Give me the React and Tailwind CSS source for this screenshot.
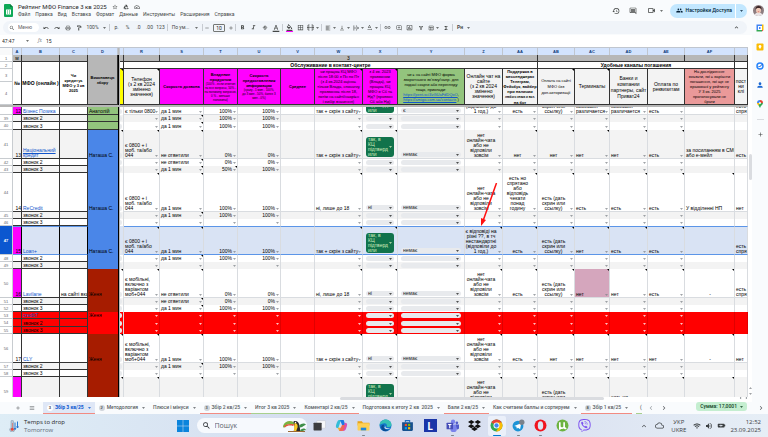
import { useState } from "react";
import clsx from "clsx";
import {
  MdStarBorder,
  MdOutlineAddToDrive,
  MdOutlineCloudDone,
  MdHistory,
  MdOutlineComment,
  MdOutlineVideocam,
  MdSearch,
  MdUndo,
  MdRedo,
  MdOutlinePrint,
  MdOutlineFormatPaint,
  MdAdd,
  MdRemove,
  MdFormatBold,
  MdFormatItalic,
  MdStrikethroughS,
  MdFormatColorText,
  MdFormatColorFill,
  MdBorderAll,
  MdFormatAlignLeft,
  MdVerticalAlignBottom,
  MdTextRotationNone,
  MdLink,
  MdOutlineAddComment,
  MdInsertChartOutlined,
  MdOutlineFilterAlt,
  MdFunctions,
  MdMenu,
  MdPeople,
  MdPerson,
  MdWifi,
  MdVolumeUp,
  MdKeyboardArrowUp,
  MdKeyboardArrowLeft,
  MdKeyboardArrowRight,
  MdOutlineCloud,
  MdBatteryChargingFull,
  MdOutlineTableChart,
} from "react-icons/md";
import { FaDropbox, FaViber } from "react-icons/fa";

const MENUS = ["Файл", "Правка", "Вид", "Вставка", "Формат", "Данные", "Инструменты", "Расширения", "Справка"];

const PHONE = "є 0800 + і\nмоб. та/або\n044";
const MOBILE = "є мобільні,\nвключно з\nваріантом\nмоб+044";
const NO_CHAT = "нет\nонлайн-чата\nабо не\nвідповіли\nзовсім";
const PROOF = "есть (дать\nскрин или\nссылку)";
const SITE = "так + скрін з сайту";
const HIDDEN = "есть но\nспрят";

// every dropdown column of the scrolled part, in order
const COLS = ["R", "S", "T", "U", "V", "W", "X", "Y", "Z", "AA", "AB", "AC", "AD", "AE", "AF", "AG"];
const COL_STYLE = {
  R: "pl-px", S: "pl-px", T: "text-right", U: "text-right", V: "", W: "pl-px",
  Z: "text-center", AA: "text-center", AB: "text-center", AC: "pl-px", AD: "pl-px", AE: "pl-px",
  AF: "pl-px", AG: "pl-px",
};
const NO_ARROW = ["V", "AF", "AG"];
const NOTES = ["R", "S", "W", "X", "AA", "AB", "AC", "AD", "AE"];

const call = (S, T, U) => ({ S, T, U });

const ROWS = [
  { n: "", h: "h-[8px]", id: "12", name: "Бізнес Позика", who: "Анатолій", d: "green", pink: true, main: true,
    cells: { R: "є тільки 0800", ...call("да 1 мин", "100%", "100%"), W: SITE, X: "yes", Y: "є", Z: "(відповіли до\n1 год.)", AA: "есть", AB: PROOF, AC: "комиссия\nразличается", AD: "комиссия\nразличается", AE: "есть", AG: HIDDEN } },
  { n: "39", h: "h-[7px]", sub: 2, d: "green", gray: true, notes: ["S"], cells: call("да 1 мин", "100%", "100%") },
  { n: "40", h: "h-[8px]", sub: 3, d: "green", notes: ["S"], cells: call("да 1 мин", "100%", "100%") },
  { n: "41", h: "h-[29px]", id: "13", name: "Національний кредит", who: "Наташа С.", d: "blue", gray: true, main: true, notes: NOTES,
    cells: { R: PHONE, ...call("не ответили", "0%", "0%"), W: SITE, X: "yes", Y: "немає", Z: NO_CHAT, AA: "нет", AB: "нет", AC: "нет", AD: "нет", AE: "есть", AF: "за посиланням в СМС\nабо е-мейл", AG: "есть" } },
  { n: "42", h: "h-[7px]", sub: 2, d: "blue", notes: ["S"], cells: call("не ответили", "0%", "0%") },
  { n: "43", h: "h-[7px]", sub: 3, d: "blue", gray: true, notes: ["S", "T"], cells: call("да 1 мин", "50%", "100%") },
  { n: "44", h: "h-[39px]", id: "14", name: "ReCredit", who: "Наташа С.", d: "blue", main: true, notes: [...NOTES, "AF"],
    cells: { R: PHONE, ...call("да 1 мин", "100%", "100%"), W: "ні, лише до 18", X: "ні", Y: "немає", Z: NO_CHAT, AA: "есть но\nспрятано\nабо\nвідповідь\nчекати\nпонад\nгодину", AB: PROOF, AC: "есть", AD: "есть", AE: "есть", AF: "У відділенні НП", AG: "нет" } },
  { n: "45", h: "h-[7px]", sub: 2, d: "blue", gray: true, notes: ["S"], cells: call("да 1 мин", "100%", "100%") },
  { n: "46", h: "h-[7px]", sub: 3, d: "blue", cells: {} },
  { n: "47", h: "h-[29px]", id: "15", name: "Loan+", who: "Наташа С.", d: "blue", pink: true, main: true, selected: true, notes: [...NOTES, "Z"],
    cells: { R: PHONE, ...call("да 1 мин", "100%", "100%"), W: SITE, X: "yes", Y: "немає", Z: "є відповіді на\nрізні ??, в тч\nнестандартні\n(відповіли до\n1 год.)", AA: "есть", AB: PROOF, AC: "нет", AD: "есть", AE: "есть", AG: HIDDEN } },
  { n: "48", h: "h-[7px]", sub: 2, d: "blue", notes: ["S"], cells: call("да 1 мин", "100%", "100%") },
  { n: "49", h: "h-[7px]", sub: 3, d: "blue", gray: true, cells: {} },
  { n: "50", h: "h-[29px]", id: "16", name: "Lavilane", site: "на сайті вказ", who: "Женя", d: "brown", pink: true, main: true, notes: [...NOTES, "Z", "AF"],
    cells: { R: MOBILE, ...call("не ответили", "0%", "0%"), W: "ні, лише до 18", X: "ні", Y: "немає", Z: NO_CHAT, AA: "есть", AB: PROOF, AC: "нет", AD: "нет", AE: "есть", AF: "-", AG: HIDDEN } },
  { n: "51", h: "h-[7px]", sub: 2, d: "brown", gray: true, notes: ["S"], cells: call("не ответили", "0%", "0%") },
  { n: "52", h: "h-[7px]", sub: 3, d: "brown", notes: ["S"], cells: call("да 1 мин", "100%", "100%") },
  { n: "53", h: "h-[7px]", name: "credit7", who: "Женя", d: "red", red: true, cells: {} },
  { n: "54", h: "h-[8px]", sub: 2, d: "red", red: true, cells: {} },
  { n: "55", h: "h-[7px]", sub: 3, d: "red", red: true, cells: {} },
  { n: "56", h: "h-[29px]", id: "17", name: "CLY", who: "Женя", d: "brown", main: true, notes: [...NOTES, "Z", "AF"],
    cells: { R: MOBILE, ...call("да 1 мин", "100%", "100%"), W: SITE, X: "ні", Y: "немає", Z: NO_CHAT, AA: "есть", AB: "нет", AC: "нет", AD: "нет", AE: "нет", AF: "-", AG: "нет" } },
  { n: "57", h: "h-[7px]", sub: 2, d: "brown", gray: true, notes: ["S"], cells: call("да 1 мин", "100%", "100%") },
  { n: "58", h: "h-[7px]", sub: 3, d: "brown", cells: {} },
  { n: "59", h: "h-[29px]", d: "brown", gray: true, pink: true, main: true, notes: [...NOTES, "Z", "AF"],
    cells: { X: "yes", Z: NO_CHAT, AB: PROOF, AD: "есть но\nспрятано" } },
];

const D_BG = { green: "bg-[#93c47d]", blue: "bg-[#4a86e8]", brown: "bg-[#a61c00]", red: "bg-[#ff0000]" };

const TABS = [
  { label: "Збір 3 кв/25", badge: "3", line: "border-[#f28b82]" },
  { label: "Методология", badge: "2" },
  { label: "Плюси і мінуси" },
  { label: "Збір 2 кв/25", badge: "3", line: "border-[#f28b82]" },
  { label: "Итог 3 кв 2025", line: "border-[#a8d08d]" },
  { label: "Коментарі 2 кв/25", line: "border-[#f28b82]" },
  { label: "Подготовка к итогу 2 кв  2025" },
  { label: "Бали 2 кв/25", line: "border-[#f28b82]" },
  { label: "Как считаем баллы и сортируем" },
  { label: "Збір 1 кв/25", badge: "8", line: "border-[#f28b82]" },
];

function Caret({ className }) {
  return (
    <svg viewBox="0 0 4 2" className={clsx("w-[3px] h-[2px] shrink-0 fill-current", className)}>
      <path d="M0 0h4L2 2z" />
    </svg>
  );
}

function Note() {
  return (
    <svg viewBox="0 0 3 3" className="absolute top-0 right-0 w-[2px] h-[2px] fill-black">
      <path d="M0 0h3v3z" />
    </svg>
  );
}

/* ---------- header ---------- */

function SheetsLogo() {
  return (
    <svg viewBox="0 0 18 26" className="w-[9px] h-[13px] shrink-0">
      <path d="M2 0h10l6 6v18a2 2 0 0 1-2 2H2a2 2 0 0 1-2-2V2a2 2 0 0 1 2-2z" fill="#0fa958" />
      <path d="M12 0l6 6h-6z" fill="#087f3f" />
      <path d="M4 11h10v10H4zm2 2v2h2v-2zm4 0v2h2v-2zm-4 4v2h2v-2zm4 0v2h2v-2z" fill="#fff" fillRule="evenodd" />
    </svg>
  );
}

function Avatar() {
  return (
    <svg viewBox="0 0 22 22" className="w-[11px] h-[11px] rounded-full">
      <rect width="22" height="22" fill="#8d7d80" />
      <path d="M3 22c0-5 4-7 8-7s8 2 8 7z" fill="#e9e4e6" />
      <ellipse cx="11" cy="10" rx="5" ry="6.5" fill="#f0c9b8" />
      <path d="M5 10C5 3 8 2 11 2s7 1 6 8c-1-3-3-4-6-4S6 7 5 10z" fill="#3d2626" />
      <path d="M9 13h4l-2 1.500z" fill="#c8474f" />
    </svg>
  );
}

function Header() {
  return (
    <header className="flex h-[21px] shrink-0 items-center pl-[4px] pr-[4px]">
      <SheetsLogo />
      <div className="ml-[5px] flex flex-col">
        <div className="flex items-center gap-[5px] h-[8px] text-[#444746]">
          <h1 className="text-[6px] leading-[8px] text-[#1f1f1f] whitespace-nowrap">Рейтинг МФО Finance 3 кв 2025</h1>
          <button aria-label="Пометить"><MdStarBorder className="size-[6px]" /></button>
          <button aria-label="Переместить"><MdOutlineAddToDrive className="size-[6px]" /></button>
          <button aria-label="Статус документа"><MdOutlineCloudDone className="size-[6px]" /></button>
        </div>
        <nav className="flex gap-[5px] text-[5px] leading-[7px] text-[#444746]">
          {MENUS.map((m) => (
            <button key={m}>{m}</button>
          ))}
        </nav>
      </div>
      <div className="ml-auto flex items-center text-[#444746]">
        <button aria-label="История" className="mr-[9px]"><MdHistory className="size-[8px]" /></button>
        <button aria-label="Комментарии" className="mr-[10px]"><MdOutlineComment className="size-[8px]" /></button>
        <button aria-label="Встреча" className="mr-[7px] flex items-center gap-[4px]">
          <MdOutlineVideocam className="size-[9px]" />
          <Caret />
        </button>
        <div className="mr-[6px] flex h-[14px] overflow-hidden rounded-full bg-[#c2e7ff] text-[#001d35]">
          <button className="flex items-center gap-[3px] border-r border-white pl-[6px] pr-[3px] text-[5px] font-medium whitespace-nowrap">
            <MdPeople className="size-[7px]" />
            Настройки Доступа
          </button>
          <button aria-label="Доступ" className="flex w-[11px] items-center justify-center"><Caret /></button>
        </div>
        <button aria-label="Аккаунт"><Avatar /></button>
      </div>
    </header>
  );
}

/* ---------- toolbar ---------- */

function Tool({ label, children, menu }) {
  return (
    <button aria-label={label} className={clsx("flex shrink-0 items-center justify-center", menu ? "w-[14px] gap-[2px]" : "w-[11px]")}>
      {children}
      {menu && <Caret />}
    </button>
  );
}

function Sep() {
  return <span className="mx-px h-[7px] w-px shrink-0 bg-[#c7cbd1]" />;
}

function Toolbar() {
  return (
    <div className="mx-[3px] mb-px mr-[5px] flex h-[13px] shrink-0 items-center rounded-full bg-[#f0f4f9] pl-[5px] text-[5px] text-[#444746]">
      <label className="mr-px flex h-[9px] w-[31px] items-center gap-[3px] rounded-full bg-white pl-[1px]">
        <MdSearch className="size-[6px] shrink-0" />
        <input placeholder="Меню" aria-label="Меню" className="w-full min-w-0 bg-transparent text-[5px] leading-[7px] outline-none placeholder:text-[#5f6368]" />
      </label>
      <Tool label="Отменить"><MdUndo className="size-[6px]" /></Tool>
      <Tool label="Повторить"><MdRedo className="size-[6px]" /></Tool>
      <Tool label="Печать"><MdOutlinePrint className="size-[6px]" /></Tool>
      <Tool label="Формат по образцу"><MdOutlineFormatPaint className="size-[6px]" /></Tool>
      <button className="flex w-[24px] items-center justify-center gap-[4px]">100%<Caret /></button>
      <Sep />
      <Tool label="Рубли">р.</Tool>
      <Tool label="Процент">%</Tool>
      <Tool label="Меньше знаков">.0</Tool>
      <Tool label="Больше знаков">.00</Tool>
      <Tool label="Форматы">123</Tool>
      <Sep />
      <button className="flex w-[32px] items-center justify-center gap-[6px] whitespace-nowrap">По ум...<Caret /></button>
      <Sep />
      <button aria-label="Уменьшить"><MdRemove className="mr-[3px] size-[6px]" /></button>
      <input aria-label="Размер шрифта" defaultValue="10" className="h-[8px] w-[12px] rounded-[1px] border border-[#747775] bg-transparent text-center text-[5px] leading-[6px] text-[#1f1f1f]" />
      <button aria-label="Увеличить"><MdAdd className="ml-[3px] size-[6px]" /></button>
      <Sep />
      <Tool label="Полужирный"><MdFormatBold className="size-[7px]" /></Tool>
      <Tool label="Курсив"><MdFormatItalic className="size-[7px]" /></Tool>
      <Tool label="Зачеркнутый"><MdStrikethroughS className="size-[6px]" /></Tool>
      <Tool label="Цвет текста"><MdFormatColorText className="size-[8px]" /></Tool>
      <Sep />
      <Tool label="Цвет заливки">
        <span className="border-b border-[#ff00ff]"><MdFormatColorFill className="size-[7px]" /></span>
      </Tool>
      <Tool label="Границы"><MdBorderAll className="size-[7px]" /></Tool>
      <Tool label="Объединить" menu>
        <svg viewBox="0 0 14 14" className="size-[7px]" fill="none" stroke="currentColor" strokeWidth="1.500">
          <path d="M5 2H2v10h3M9 2h3v10H9M0 7h5M14 7H9M4 5l2 2-2 2M10 5L8 7l2 2" />
        </svg>
      </Tool>
      <Sep />
      <Tool label="Выравнивание" menu><MdFormatAlignLeft className="size-[6px]" /></Tool>
      <Tool label="По вертикали" menu><MdVerticalAlignBottom className="size-[6px]" /></Tool>
      <Tool label="Перенос" menu>
        <svg viewBox="0 0 14 14" className="size-[6px]" fill="none" stroke="currentColor" strokeWidth="1.500">
          <path d="M2 1v12M8 1v3M8 10v3M3 7h10M10 4l3 3-3 3" />
        </svg>
      </Tool>
      <Tool label="Поворот" menu><MdTextRotationNone className="size-[7px]" /></Tool>
      <Sep />
      <Tool label="Ссылка"><MdLink className="size-[7px]" /></Tool>
      <Tool label="Комментарий"><MdOutlineAddComment className="size-[6px]" /></Tool>
      <Tool label="Диаграмма"><MdInsertChartOutlined className="size-[7px]" /></Tool>
      <Tool label="Фильтр"><MdOutlineFilterAlt className="size-[6px]" /></Tool>
      <Tool label="Таблица" menu><MdOutlineTableChart className="size-[6px]" /></Tool>
      <Tool label="Функции"><MdFunctions className="size-[6px]" /></Tool>
      <Sep />
      <button className="ml-[3px] flex items-center gap-[4px] font-bold">Рн<Caret /></button>
      <button aria-label="Скрыть меню" className="ml-auto mr-[7px]"><MdKeyboardArrowUp className="size-[7px]" /></button>
    </div>
  );
}

function FormulaBar() {
  const [value, setValue] = useState("15");
  return (
    <div className="flex h-[12px] shrink-0 items-center bg-white text-[5px] text-[#1f1f1f]">
      <input aria-label="Диапазон" defaultValue="47:47" className="w-[24px] pl-[2px] text-[5px] leading-[7px] outline-none" />
      <Caret className="ml-[2px] text-[#444746]" />
      <span className="ml-[9px] w-[8px] font-serif italic text-[#80868b]">fx</span>
      <input aria-label="Формула" value={value} onChange={(e) => setValue(e.target.value)} className="min-w-0 flex-1 text-[5px] leading-[7px] outline-none" />
    </div>
  );
}

/* ---------- grid ---------- */

function ColumnLetters() {
  const letters = ["", "A", "B", "C", "D", null, "", ...COLS];
  return (
    <tr className="text-[4px] leading-[5px] font-bold text-[#0b3a7a]">
      {letters.map((l, i) => (
        <th key={i} className="p-0">
          <div className={clsx("flex h-[8px] items-center justify-center overflow-hidden border-t border-r border-[#c0c6cf]", l === null ? "bg-[#b7b7b7]" : i === 0 ? "bg-[#f8f9fa]" : "bg-[#d3e3fd]")}>
            {l === "AG" ? "" : l}
          </div>
        </th>
      ))}
    </tr>
  );
}

function RowNumber({ children, h, selected }) {
  return (
    <th className="p-0 font-normal">
      <div className={clsx("flex items-center justify-center overflow-hidden border-r border-b border-[#c8ccd0] text-[4px] leading-[5px]", h, selected ? "bg-[#0b57d0] font-bold text-white" : "bg-white text-[#5f6368]")}>
        {children}
      </div>
    </th>
  );
}

function Freeze({ h }) {
  return (
    <td className="p-0">
      <div className={clsx("border-l border-black bg-[#b7b7b7]", h)} />
    </td>
  );
}

function HeadCell({ className, children, note, rowSpan = 2, colSpan, h = "h-[36px]" }) {
  return (
    <th rowSpan={rowSpan} colSpan={colSpan} className="p-0 font-normal">
      <div className={clsx("relative flex items-center justify-center overflow-hidden border-r border-b border-[#333] text-center whitespace-nowrap", h, className)}>
        <div>{children}</div>
        {note && <Note />}
      </div>
    </th>
  );
}

const GRAY = "bg-[#f3f3f3] text-[5px] leading-[5px]";
const PINK = "bg-[#ff00ff] text-[4px] leading-[5px]";
const BAND = "bg-[#b7b7b7] text-[5px] leading-[6px]";

function FrozenRows() {
  return (
    <>
      <tr>
        <RowNumber h="h-[7px]">1</RowNumber>
        <HeadCell rowSpan={1} h="h-[7px]" className={BAND}>м</HeadCell>
        <HeadCell rowSpan={1} h="h-[7px]" className={BAND} />
        <HeadCell rowSpan={1} h="h-[7px]" className={BAND} />
        <HeadCell rowSpan={4} h="h-[50px]" className="bg-[#b7b7b7] text-[4px] leading-[5px] font-bold">Виконавець<br />збору</HeadCell>
        <Freeze h="h-[7px]" />
        <HeadCell rowSpan={1} h="h-[7px]" className={BAND} />
        <HeadCell rowSpan={1} h="h-[7px]" className={BAND} />
        <HeadCell rowSpan={1} colSpan={9} h="h-[7px]" className={BAND}>3</HeadCell>
        <HeadCell rowSpan={1} colSpan={4} h="h-[7px]" className={BAND} />
        <HeadCell rowSpan={1} h="h-[7px]" className={BAND} />
        <HeadCell rowSpan={1} h="h-[7px]" className={BAND} />
      </tr>
      <tr>
        <RowNumber h="h-[7px]">2</RowNumber>
        <HeadCell rowSpan={3} h="h-[43px]" className="bg-white text-[5px] font-bold">№</HeadCell>
        <HeadCell rowSpan={3} h="h-[43px]" className="bg-white text-[5px] font-bold">МФО (онлайн )</HeadCell>
        <HeadCell rowSpan={3} h="h-[43px]" className="bg-white text-[4px] leading-[5px] font-bold">Чи<br />кредитує<br />МФО у 3 кв<br />2025</HeadCell>
        <Freeze h="h-[7px]" />
        <HeadCell rowSpan={1} h="h-[7px]" className="bg-white" />
        <HeadCell rowSpan={1} colSpan={10} h="h-[7px]" className="bg-white text-[5px] leading-[6px] font-bold">Обслуживание в контакт-центре</HeadCell>
        <HeadCell rowSpan={1} colSpan={5} h="h-[7px]" className="bg-white text-[5px] leading-[6px] font-bold">Удобные каналы погашения</HeadCell>
        <HeadCell rowSpan={1} h="h-[7px]" className="bg-white" />
      </tr>
      <tr>
        <RowNumber h="h-[13px]">3</RowNumber>
        <Freeze h="h-[13px]" />
        <HeadCell className="bg-[#ffff00]" note />
        <HeadCell className={GRAY} note>Телефон<br />(з 2 кв 2024<br />змінено<br />значення)</HeadCell>
        <HeadCell className={PINK}><b>Скорость дозвона</b></HeadCell>
        <HeadCell className={PINK}>
          <b>Владение</b><br />
          <b>продуктом</b>
          <div className="text-[3px] leading-[4px]">(100% - если ответил<br />на все вопросы, 50% -<br />на половину вопросов,<br />0 % - меньше<br />половины)</div>
        </HeadCell>
        <HeadCell className={PINK}>
          <b>Скорость<br />предоставления<br />информации</b>
          <div className="text-[3px] leading-[4px]">(сразу - 1 мин - 100%,<br />до 3 мин - 50%, более 3<br />мин - 0%)</div>
        </HeadCell>
        <HeadCell className={PINK}><b>Среднее</b></HeadCell>
        <HeadCell className={PINK} note>
          чи працює КЦ МФО<br />після 18:00 з Пн по Пт<br />(з 4 кв.2024 оцінює<br />тільки Влада, спочатку<br />прозвонює після 18,<br />потім на сайті/наорієн<br />і вибір значення)
        </HeadCell>
        <HeadCell className={PINK} note>з 4 кв. 2023<br />прозвоном<br />(Влада), чи<br />працює КЦ<br />МФО в Сб та<br />Нд? (прозвон<br />Сб або Нд)</HeadCell>
        <HeadCell className="bg-[#93c47d] text-[4px] leading-[5px]">
          чи є на сайті МФО форма<br />зворотнього зв'язку/напр. для<br />подачі скарги або перегляду<br />тощо, приклади:
          <br />
          <a href="#pent" className="text-[#1155cc] underline">https://pent.sc/4vGUaFdDQoO</a>,
          <br />
          <a href="#amigo" className="text-[#1155cc] underline">https://amigo.com.ua/contacts</a> )
        </HeadCell>
        <HeadCell className={GRAY}>Онлайн чат на<br />сайте<br />(з 2 кв 2024<br />змінено<br />значення)</HeadCell>
        <HeadCell className="bg-[#f3f3f3] text-[4px] leading-[5px] font-bold">
          Поддержка в<br />мессенджерах<br />Телеграм,<br />Фейсбук, вайбер<br />при наличии<br /><span className="text-[3px]">любого знака и вкл.</span><br />на бот
        </HeadCell>
        <HeadCell className="bg-[#f3f3f3] text-[4px] leading-[6px]" note>Оплата на сайті<br />МФО без<br />доп.авторизації</HeadCell>
        <HeadCell className={GRAY} note>Терминалы</HeadCell>
        <HeadCell className="bg-[#f3f3f3] text-[5px] leading-[6px]">Банки и<br />компании<br />партнеры, сайт<br />Приват24</HeadCell>
        <HeadCell className={GRAY}>Оплата по<br />реквизитам</HeadCell>
        <HeadCell className="bg-[#ea9999] text-[4px] leading-[5px]">На дослідження:<br />вказати, які є варіанти<br />погашення, які ще не<br />враховані у рейтингу<br />У 3 кв. 2025<br />проголосували не<br />брати</HeadCell>
        <HeadCell className={GRAY}>пост<br />ни<br />клі</HeadCell>
      </tr>
      <tr>
        <RowNumber h="h-[23px]">4</RowNumber>
        <Freeze h="h-[23px]" />
      </tr>
      <tr>
        <td colSpan={23} className="p-0"><div className="h-[2px] bg-[#b7b7b7]" /></td>
      </tr>
    </>
  );
}

function Chip({ col, value, row }) {
  if (value === "yes") {
    return (
      <button className="mb-px flex w-full items-center justify-between overflow-hidden rounded-[3px] bg-[#11734b] px-[2px] text-left text-[5px] leading-[5px] whitespace-nowrap text-[#d4edbc]">
        <span>так, в<br />КЦ<br />підтверд<br />или</span>
        <Caret />
      </button>
    );
  }
  return (
    <div className="mb-px flex h-[5px] w-full items-center rounded-full bg-[#e8eaed] pr-[2px] text-[#1f1f1f]">
      <select aria-label={`${col}${row}`} defaultValue={value || ""} className="h-[5px] min-w-0 flex-1 appearance-none bg-transparent pl-[2px] text-[5px] leading-[5px] outline-none">
        <option value={value || ""}>{value || ""}</option>
      </select>
      <Caret />
    </div>
  );
}

function DataCell({ col, row }) {
  const value = row.cells[col];
  const chip = col === "X" || col === "Y";
  const note = row.notes?.includes(col);
  return (
    <td className="p-0">
      <div
        className={clsx(
          "relative flex items-end overflow-hidden border-r",
          row.h,
          chip ? "px-[3px]" : !row.main && "pb-px",
          row.red ? "border-[#e00000]" : "border-[#d9dce0]",
          row.main && !row.selected && "border-b",
          col === "AC" && row.n === "50" && "bg-[#d5a6bd]",
          row.selected && "border-y border-t-[#5b95e8] border-b-[#5b95e8]"
        )}
      >
        {chip ? (
          <Chip col={col} value={value} row={row.n} />
        ) : (
          <>
            <span className={clsx("min-w-0 flex-1 whitespace-pre", COL_STYLE[col], value === "-" && "text-center")}>{value}</span>
            {!NO_ARROW.includes(col) && (
              <button aria-label={`Список ${col}${row.n}`} className={clsx("mb-px flex w-[5px] shrink-0 justify-center", row.red ? "text-white" : "text-[#80868b]")}>
                <Caret />
              </button>
            )}
          </>
        )}
        {note && <Note />}
      </div>
    </td>
  );
}

function DataRow({ row }) {
  const bg = row.red ? "bg-[#ff0000]" : row.selected ? "bg-[#d9e3f4]" : row.gray ? "bg-[#f3f3f3]" : "bg-white";
  const left = clsx("flex items-end overflow-hidden border-r border-b", row.h, row.selected ? "border-t border-r-black border-y-[#5b95e8]" : "border-[#333]");
  return (
    <tr className={bg}>
      <RowNumber h={row.h} selected={row.selected}>{row.n}</RowNumber>
      <td className="p-0">
        <div className={clsx(left, "justify-end", row.pink && "bg-[#ff00ff]")}>{row.id}</div>
      </td>
      <td className="p-0">
        <div className={clsx(left, "pl-px")}>
          {row.name ? <a href={"#" + row.name} className="text-[#1155cc] underline">{row.name}</a> : row.sub ? `звонок ${row.sub}` : null}
        </div>
      </td>
      <td className="p-0">
        <div className={clsx(left, "pl-px whitespace-nowrap")}>{row.site}</div>
      </td>
      <td className="p-0">
        <div className={clsx("flex items-end overflow-hidden pl-px whitespace-nowrap", row.h, D_BG[row.d], row.d === "green" ? "border-b border-[#333]" : "pb-px")}>{row.who}</div>
      </td>
      <Freeze h={row.h} />
      <td className="p-0">
        <div className={clsx("relative flex items-end border-r border-[#d9dce0] pb-px", row.h)}>
          <span className="h-[5px] w-[2px] rounded-r-full bg-[#e8eaed]" />
          {row.main && row.n && row.n !== "44" && row.n !== "47" && <Note />}
        </div>
      </td>
      {COLS.map((c) => (
        <DataCell key={c} col={c} row={row} />
      ))}
    </tr>
  );
}

function Grid() {
  return (
    <div className="relative min-h-0 min-w-0 flex-1 overflow-hidden font-['Liberation_Sans',Arial,sans-serif] text-black">
      <table className="w-full table-fixed border-separate border-spacing-0 text-[5px] leading-[5px]">
        <colgroup>
          <col className="w-[13px]" />
          <col className="w-[9px]" />
          <col className="w-[38px]" />
          <col className="w-[28px]" />
          <col className="w-[30px]" />
          <col className="w-[2px]" />
          <col className="w-[4px]" />
          <col className="w-[36px]" />
          <col className="w-[44px]" />
          <col className="w-[34px]" />
          <col className="w-[43px]" />
          <col className="w-[34px]" />
          <col className="w-[48px]" />
          <col className="w-[35px]" />
          <col className="w-[67px]" />
          <col className="w-[38px]" />
          <col className="w-[35px]" />
          <col className="w-[37px]" />
          <col className="w-[35px]" />
          <col className="w-[38px]" />
          <col className="w-[37px]" />
          <col className="w-[50px]" />
          <col />
        </colgroup>
        <thead>
          <ColumnLetters />
          <FrozenRows />
        </thead>
        <tbody>
          {ROWS.map((r) => (
            <DataRow key={r.n} row={r} />
          ))}
        </tbody>
      </table>
      {/* annotation arrow pointing at Z47 */}
      <svg viewBox="0 0 20 44" className="absolute top-[136px] left-[479px] h-[44px] w-[20px]">
        <path d="M17.500 0L4 38" stroke="#ff1010" strokeWidth="1.500" />
        <path d="M2 43V35l5 2z" fill="#ff1010" />
      </svg>
    </div>
  );
}

function ScrollColumn() {
  return (
    <div className="flex w-[4px] shrink-0 flex-col items-center bg-white">
      <div className="mt-[107px] h-[26px] w-[3px] rounded-full bg-[#dadce0]" />
      <div className="mt-auto mb-[2px] flex flex-col gap-[4px] text-[#80868b]">
        <Caret className="rotate-180" />
        <Caret />
      </div>
    </div>
  );
}

function SidePanel() {
  return (
    <aside className="flex w-[16px] shrink-0 flex-col items-center gap-[11px] pt-[3px]">
      <button aria-label="Календарь">
        <svg viewBox="0 0 16 16" className="size-[8px]">
          <path d="M1 1h11v3H4v8H1z" fill="#4285f4" />
          <path d="M12 1h3v11h-3z" fill="#fbbc04" />
          <path d="M1 12h11v3H1z" fill="#34a853" />
          <path d="M12 12h3l-3 3z" fill="#ea4335" />
          <path d="M4 4h8v8H4z" fill="#fff" />
          <path d="M6 6h2v4H6zm3 0h1v4H9z" fill="#4285f4" />
        </svg>
      </button>
      <button aria-label="Заметки">
        <svg viewBox="0 0 16 16" className="size-[8px]">
          <rect x="1" y="1" width="14" height="14" rx="2" fill="#fbbc04" />
          <path d="M8 4a3 3 0 0 0-1.500 5.500V11h3V9.500A3 3 0 0 0 8 4z" fill="#fff" />
        </svg>
      </button>
      <button aria-label="Задачи">
        <svg viewBox="0 0 16 16" className="size-[8px]">
          <circle cx="8" cy="8" r="6" fill="none" stroke="#2684fc" strokeWidth="3" />
          <path d="M5 8l2 2 6-6" fill="none" stroke="#0b57d0" strokeWidth="2" />
        </svg>
      </button>
      <button aria-label="Контакты"><MdPerson className="size-[8px] text-[#1967d2]" /></button>
      <button aria-label="Карты">
        <svg viewBox="0 0 16 16" className="size-[8px]">
          <path d="M8 0a6 6 0 0 0-6 6h6z" fill="#4285f4" />
          <path d="M8 0a6 6 0 0 1 6 6H8z" fill="#ea4335" />
          <path d="M2 6h6l-3 5C3 9 2 8 2 6z" fill="#fbbc04" />
          <path d="M14 6c0 4-5 5-6 10-1-2-2-3-3-5l3-5z" fill="#34a853" />
          <circle cx="8" cy="6" r="2" fill="#fff" />
        </svg>
      </button>
      <span className="h-px w-[7px] bg-[#dadce0]" />
      <button aria-label="Дополнения"><MdAdd className="size-[7px] text-[#444746]" /></button>
    </aside>
  );
}

function SheetTabs() {
  const [active, setActive] = useState(0);
  return (
    <footer className="flex h-[12px] shrink-0 items-stretch bg-[#f9fbfd] text-[5px] leading-[7px] font-medium text-[#575b5f]">
      <button aria-label="Добавить лист" className="ml-[15px]"><MdAdd className="size-[6px]" /></button>
      <button aria-label="Все листы" className="mr-[8px] ml-[8px]"><MdMenu className="size-[6px]" /></button>
      {TABS.map((t, i) => (
        <button
          key={t.label}
          onClick={() => setActive(i)}
          className={clsx(
            "flex shrink-0 items-center gap-[2px] border-b px-[4px] whitespace-pre",
            t.line || "border-transparent",
            active === i && "bg-[#dfe7f6] font-bold text-[#0b57d0]"
          )}
        >
          {t.badge && (
            <span className={clsx("flex size-[6px] items-center justify-center rounded-full text-[4px] leading-[4px] text-[#444746]", active === i ? "bg-white" : "bg-[#cfd4da]")}>{t.badge}</span>
          )}
          {t.label}
          <Caret className="ml-[2px]" />
        </button>
      ))}
      <button className="ml-[4px] shrink-0 border-b border-[#a8d08d] pl-[4px]">(</button>
      <button aria-label="Назад" className="ml-[5px] text-[#9aa0a6]"><MdKeyboardArrowLeft className="size-[8px]" /></button>
      <button aria-label="Вперед" className="ml-[5px]"><MdKeyboardArrowRight className="size-[8px]" /></button>
      <button className="mr-[10px] mb-[3px] ml-auto flex shrink-0 items-center gap-[3px] rounded-[3px] bg-[#c4eed0] px-[4px] text-[5px] text-[#0a3d1c]">
        Сумма: 17,0001
        <Caret />
      </button>
      <button aria-label="Показать панель" className="mr-[3px]"><MdKeyboardArrowRight className="size-[8px]" /></button>
    </footer>
  );
}

/* ---------- taskbar ---------- */

function AppIcon({ label, active, running, children }) {
  return (
    <button
      aria-label={label}
      className={clsx("flex h-[20px] w-[18px] shrink-0 flex-col items-center justify-between rounded-[2px] pt-[3px]", active && "bg-[#ebf0fa]")}
    >
      <svg viewBox="0 0 24 24" className="size-[13px]">{children}</svg>
      <span className={clsx("h-px rounded-full", active ? "w-[8px] bg-[#0078d4]" : running ? "w-[3px] bg-[#80868b]" : "w-[3px]")} />
    </button>
  );
}

function Taskbar() {
  return (
    <div className="flex h-[23px] shrink-0 items-center bg-linear-to-r from-[#deedf6] via-[#d3daee] to-[#e6eef6] font-['Open_Sans',sans-serif] text-[6px] leading-[8px] text-[#1f2328]">
      <div className="flex flex-1 items-center gap-[5px] pl-[9px]">
        <svg viewBox="0 0 20 24" className="h-[12px] w-[10px]">
          <path d="M4 3a2.500 2.500 0 0 1 5 0v12a5 5 0 1 1-5 0z" fill="#b8c8d8" stroke="#7d94ab" />
          <circle cx="6.500" cy="18.500" r="3" fill="#e4483c" />
          <path d="M6 6h1v12H6z" fill="#e4483c" />
          <path d="M12 5v14m-2-3l2 3 2-3M17 3v13m-2-3l2 3 2-3" stroke="#2575d0" strokeWidth="2" fill="none" />
        </svg>
        <div className="whitespace-nowrap">
          <div>Temps to drop</div>
          <div className="text-[#5f6b78]">Tomorrow</div>
        </div>
      </div>
      <div className="flex items-center gap-[4px]">
        <button aria-label="Пуск" className="mr-[4px]">
          <svg viewBox="0 0 24 24" className="size-[12px]" fill="#0b84dc">
            <path d="M0 0h11.500v11.500H0zM12.500 0H24v11.500H12.500zM0 12.500h11.500V24H0zM12.500 12.500H24V24H12.500z" />
          </svg>
        </button>
        <label className="flex h-[15px] w-[110px] items-center rounded-full bg-[#f6f9fd] pl-[5px]">
          <MdSearch className="size-[9px] shrink-0" />
          <input aria-label="Пошук" placeholder="Пошук" className="ml-[4px] min-w-0 flex-1 bg-transparent text-[7px] leading-[9px] outline-none placeholder:text-[#5b636b]" />
          <svg viewBox="0 0 50 28" className="h-[14px] w-[25px] shrink-0">
            <path d="M2 14C5 4 16 2 23 6l3 5C18 9 8 9 5 17c-2 1-3-1-3-3z" fill="#7bb342" />
            <path d="M4 15c4-5 12-6 21-4l-3 3c-6-2-12-1-16 3z" fill="#e2553b" />
            <path d="M23 5c6-3 11 2 12 8l2 13H22c4-6 4-9 2-14z" fill="#2a2a2e" />
            <path d="M25 8c5-1 7 4 6 9l-3 8h-4z" fill="#fbc928" />
            <circle cx="27" cy="7" r="1.500" fill="#fff" />
            <path d="M34 14c5-6 11-6 14-2-4 0-5 4-12 5zM36 24c4-6 9-6 12-2-4 0-6 3-12 3z" fill="#3f8f4a" />
            <path d="M12 25h34" stroke="#9a6a35" strokeWidth="2" />
          </svg>
        </label>
        <AppIcon label="Представление задач">
          <rect x="7" y="3" width="16" height="14" rx="1" fill="#f7f8fa" stroke="#c3c8cf" />
          <rect x="1" y="7" width="15" height="14" rx="1" fill="#3c3c3e" />
        </AppIcon>
        <AppIcon label="Copilot">
          <path d="M8 2h8l3 9h-6l-2-5z" fill="#1b79e3" />
          <path d="M8 2C5 2 4 5 2 11c-1 4 0 6 4 6l4-12c0-2 0-3-2-3z" fill="#33bdd8" />
          <path d="M16 22H8l-3-6h6l3 3z" fill="#f4b02c" />
          <path d="M16 22c3 0 4-3 6-9 1-4 0-6-4-6l-4 12c0 2 0 3 2 3z" fill="#d94fb5" />
          <path d="M13 11h6l-3 9-3 2H8z" fill="#f0645a" />
        </AppIcon>
        <AppIcon label="Проводник" running>
          <path d="M1 4h8l2 3h12v5H1z" fill="#e8a317" />
          <rect x="1" y="8" width="22" height="13" rx="1" fill="#fdd054" />
          <path d="M7 21v-5h10v5z" fill="#1e87dd" />
        </AppIcon>
        <AppIcon label="Edge">
          <circle cx="12" cy="12" r="11" fill="#1479c9" />
          <path d="M1 12C1 5 7 1 12 1c7 0 11 5 11 9 0 5-7 6-9 4 2-3-1-6-4-6-4 0-8 2-9 4z" fill="#35c1b5" />
          <path d="M9 12c-2 5 3 9 9 8-6 5-14 1-14-5 0-3 3-5 6-5 0 0-1 1-1 2z" fill="#0c4a92" />
          <path d="M12 13c-1 4 4 5 9 3-3 4-11 3-11-1z" fill="#d3dbee" />
        </AppIcon>
        <AppIcon label="Магазин">
          <path d="M8 6V3h8v3" fill="none" stroke="#1b6ec2" strokeWidth="2" />
          <path d="M2 6h20v14a2 2 0 0 1-2 2H4a2 2 0 0 1-2-2z" fill="#17518f" />
          <path d="M7 9h4v4H7z" fill="#f25022" />
          <path d="M13 9h4v4h-4z" fill="#7fba00" />
          <path d="M7 15h4v4H7z" fill="#00a4ef" />
          <path d="M13 15h4v4h-4z" fill="#ffb900" />
        </AppIcon>
        <button aria-label="L" className="mx-[3px] flex size-[13px] items-center justify-center bg-[#1a35a8] text-[10px] leading-[12px] font-bold text-white">L</button>
        <AppIcon label="Teams" running>
          <circle cx="13" cy="5" r="4" fill="#7b83eb" />
          <circle cx="20" cy="7" r="2.500" fill="#5059c9" />
          <path d="M8 10h12v8a6 6 0 0 1-12 1z" fill="#7b83eb" />
          <path d="M18 10h6v6a3 3 0 0 1-4 3z" fill="#5059c9" />
          <rect x="1" y="7" width="12" height="12" rx="1" fill="#464eb8" />
          <path d="M4 10h6M7 10v7" stroke="#fff" strokeWidth="2" />
        </AppIcon>
        <AppIcon label="Dropbox"><FaDropbox size={24} color="#111" /></AppIcon>
        <AppIcon label="Chrome" active>
          <circle cx="12" cy="12" r="11" fill="#34a853" />
          <path d="M12 12L2.500 6.500A11 11 0 0 1 21.500 6.500z" fill="#ea4335" />
          <path d="M12 6.500h9.500A11 11 0 0 1 11 23l6-8.500z" fill="#fbbc04" />
          <circle cx="12" cy="12" r="5.500" fill="#fff" />
          <circle cx="12" cy="12" r="4" fill="#4285f4" />
        </AppIcon>
        <AppIcon label="Telegram" running>
          <circle cx="11" cy="13" r="10" fill="#1c93d6" />
          <path d="M4 13l13-5-2 11-4-3-2 2-1-4z" fill="#fff" />
          <circle cx="18" cy="6" r="5" fill="#7a828b" />
        </AppIcon>
        <AppIcon label="Opera" running>
          <ellipse cx="12" cy="12" rx="11" ry="11" fill="#f0141e" />
          <ellipse cx="12" cy="12" rx="5" ry="8" fill="#dde4f2" />
        </AppIcon>
        <AppIcon label="uTorrent">
          <circle cx="12" cy="12" r="11" fill="#6cb33f" />
          <path d="M7 6v7c0 5 7 5 8 1V6M15 14c0 3 2 4 4 3M7 12v8" fill="none" stroke="#fff" strokeWidth="3" />
        </AppIcon>
        <AppIcon label="Viber"><FaViber size={24} color="#7d51f0" /></AppIcon>
      </div>
      <div className="flex flex-1 items-center justify-end gap-[4px] pr-[7px] text-[#3c4043]">
        <MdKeyboardArrowUp className="mr-[3px] size-[8px]" />
        <MdOutlineCloud className="mr-[3px] size-[9px]" />
        <div className="mr-[3px] text-center"><div>УКР</div><div>UKRE</div></div>
        <MdWifi className="size-[8px]" />
        <MdVolumeUp className="size-[8px]" />
        <MdBatteryChargingFull className="size-[9px] rotate-90" />
        <div className="text-right"><div>12:52</div><div>23.09.2025</div></div>
      </div>
    </div>
  );
}

export default function App() {
  return (
    <div className="flex h-screen flex-col overflow-hidden bg-[#f9fbfd] font-['Roboto',sans-serif]">
      <Header />
      <div className="flex min-h-0 flex-1">
        <main className="flex min-w-0 flex-1 flex-col">
          <Toolbar />
          <FormulaBar />
          <div className="flex min-h-0 flex-1">
            <Grid />
            <ScrollColumn />
          </div>
          <div className="flex h-[5px] shrink-0 items-start bg-white text-[#80868b]">
            <div className="mr-[18%] ml-auto h-[3px] w-[35%] rounded-full bg-[#dadce0]" />
            <div className="flex gap-[3px] pr-[4px]">
              <Caret className="rotate-90" />
              <Caret className="-rotate-90" />
            </div>
          </div>
        </main>
        <SidePanel />
      </div>
      <SheetTabs />
      <Taskbar />
    </div>
  );
}
